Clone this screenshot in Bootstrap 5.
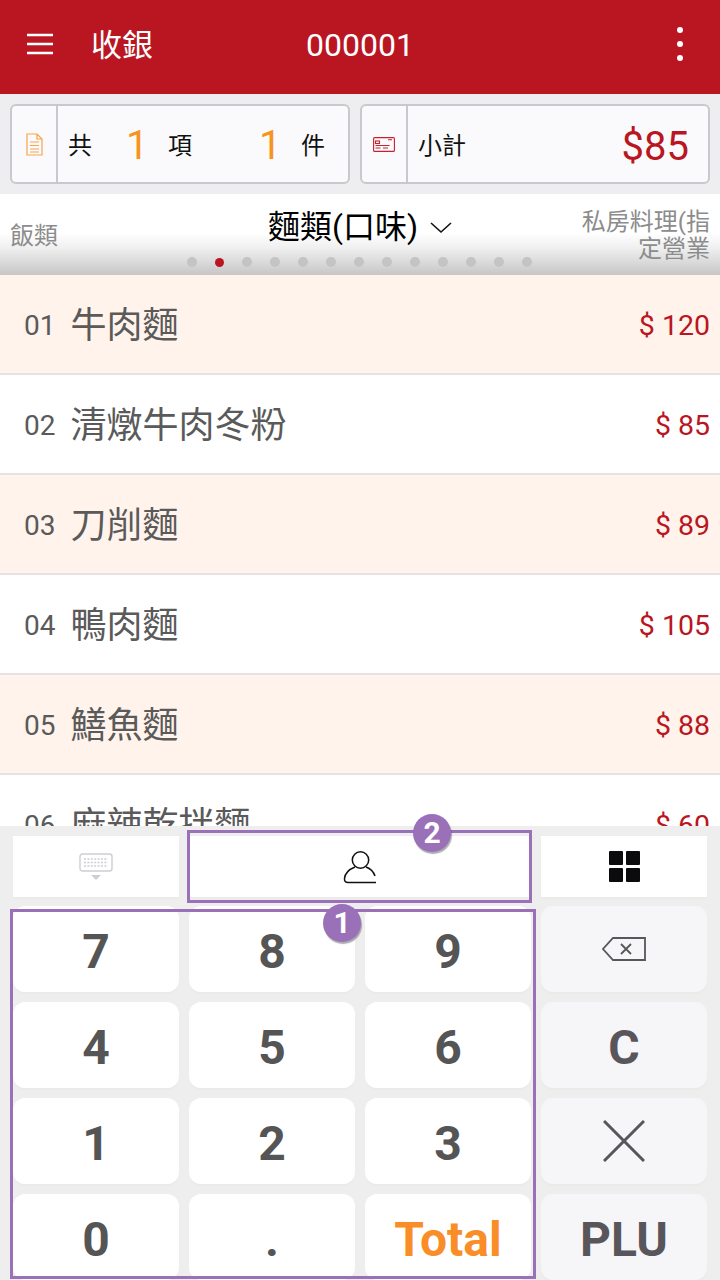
<!DOCTYPE html>
<html lang="zh-Hant">
<head>
  <meta charset="UTF-8" />
  <meta name="viewport" content="width=device-width, initial-scale=1.0"/>
  <title>收銀</title>
  <link href="https://cdn.jsdelivr.net/npm/bootstrap@5.3.2/dist/css/bootstrap.min.css" rel="stylesheet" />
  <style>
    html, body { margin: 0; background: #fff; }
    body { font-family: Roboto, "Noto Sans CJK TC", sans-serif; }
    .pos-page { width: 720px; height: 1280px; overflow: hidden; position: relative; }

    .pos-head { height: 94px; flex: none; background: #b91622; color: #fff; padding-left: 27px; padding-right: 37px; padding-bottom: 6px; }
    .pos-head-title { font-size: 31px; margin-left: 38px; margin-top: 2px; width: 215px; line-height: 1; }
    .pos-head-code { font-size: 32px; margin-top: 2px; line-height: 1; width: 106px; white-space: nowrap; }

    .sum-bar { height: 100px; flex: none; background: #eeeef0; padding: 10px; gap: 10px; }
    .sum-box { height: 80px; flex: none; background: #fafafc; border: 2px solid #c9c9cd; border-radius: 6px; }
    .sum-box-count { width: 340px; }
    .sum-box-price { width: 350px; }
    .sum-icon { width: 46px; flex: none; border-right: 2px solid #c9c9cd; }
    .sum-row { padding-top: 3px; }
    .sum-text { font-size: 24px; color: #111; line-height: 1; }
    .sum-num { font-size: 40px; color: #f7931e; line-height: 1; }
    .sum-price { font-size: 40px; color: #b91622; line-height: 1; margin-top: 2px; }

    .tab-bar { height: 81px; flex: none; background: linear-gradient(to bottom, #fff 0, #fff 48%, #eeeeee 68%, #c6c6c6 100%); position: relative; }
    .tab-side { font-size: 24px; line-height: 27px; color: #8c8c8c; position: absolute; }
    .tab-main { font-size: 32px; line-height: 1; color: #000; position: absolute; left: 268px; top: 17px; white-space: nowrap; }
    .tab-dots { position: absolute; left: 187px; top: 63px; gap: 18px; }
    .tab-dot { width: 10px; height: 10px; border-radius: 50%; background: #c4c4c4; }
    .tab-dot-on { background: #b91622; width: 9px; height: 9px; margin-top: 1px; }

    .dish-list { flex: 1 1 0; overflow: hidden; }
    .dish-row { height: 100px; padding: 3px 10px 0 24px; border-bottom: 2px solid #e4e4e8; background: #fff; }
    .dish-row-alt { background: #fff3ec; }
    .dish-no { font-size: 28px; color: #5a5a5a; width: 46.5px; line-height: 1; }
    .dish-name { font-size: 36px; color: #5a5a5a; line-height: 1; }
    .dish-price { font-size: 28.5px; color: #b91622; line-height: 1; margin-top: 2px; }

    .key-pad { height: 454px; flex: none; background: #eeeeef; padding: 10px 13px 0; gap: 9px; }
    .key-top { height: 61px; flex: none; gap: 10px; }
    .key-cell { background: #fff; box-shadow: 0 2px 2px rgba(0,0,0,.02); }
    .key-side { width: 166px; flex: none; }
    .key-wide { flex: 1 1 0; }
    .key-grid { display: grid; grid-template-columns: repeat(4, 166px); grid-auto-rows: 86px; gap: 10px; }
    .key-btn { background: #fff; border-radius: 12px; font-size: 48px; font-weight: 700; color: #555; line-height: 1; padding-top: 5px; box-shadow: 0 2px 2px rgba(0,0,0,.02); }
    .key-fn { background: #f6f5f8; color: #58565a; }
    .key-icon { padding-top: 0; }
    .key-total { color: #f98d27; }

    .mark-box { position: absolute; border: 3px solid #9a70b8; pointer-events: none; }
    .mark-num { position: absolute; width: 38px; height: 38px; border-radius: 50%; background: #9a70b8; color: #fff; font-size: 30px; font-weight: 700; line-height: 1; box-shadow: 1px 2px 1px rgba(90,90,100,.5); }
  </style>
</head>
<body>
<div class="pos-page d-flex flex-column">

  <!-- header -->
  <div class="pos-head d-flex align-items-center">
    <svg width="26" height="22" viewBox="0 0 26 22"><path d="M0 2h26M0 11h26M0 20h26" stroke="#fff" stroke-width="2.6"/></svg>
    <div class="pos-head-title">收銀</div>
    <div class="pos-head-code">000001</div>
    <div class="ms-auto d-flex flex-column" style="gap:8px">
      <span class="d-block bg-white rounded-1" style="width:6px;height:6px"></span>
      <span class="d-block bg-white rounded-1" style="width:6px;height:6px"></span>
      <span class="d-block bg-white rounded-1" style="width:6px;height:6px"></span>
    </div>
  </div>

  <!-- totals -->
  <div class="sum-bar d-flex">
    <div class="sum-box sum-box-count d-flex">
      <div class="sum-icon d-flex align-items-center justify-content-center">
        <svg width="17" height="23" viewBox="0 0 17 23" fill="none" stroke="#f5a54a" stroke-width="1.2"><path d="M1 1h10l5 5v16H1zM11 1v5h5M4 9h9M4 12.500h9M4 16h9M4 19h9"/></svg>
      </div>
      <div class="sum-row flex-grow-1 d-flex align-items-center sum-text" style="padding-left:10px">
        <span style="width:58px">共</span>
        <span class="sum-num" style="width:42px">1</span>
        <span style="width:91px">項</span>
        <span class="sum-num" style="width:42px">1</span>
        <span>件</span>
      </div>
    </div>
    <div class="sum-box sum-box-price d-flex">
      <div class="sum-icon d-flex align-items-center justify-content-center">
        <svg width="22" height="15" viewBox="0 0 22 15" fill="none" stroke="#c8202e" stroke-width="1.1"><rect x=".6" y=".6" width="20.800" height="13.800" rx="1"/><rect x="2.500" y="4" width="4" height="2.500"/><path d="M15 2.800h4M2.500 8.500h14M2.500 11h5M10 11h5"/></svg>
      </div>
      <div class="sum-row flex-grow-1 d-flex align-items-center justify-content-between sum-text" style="padding-left:10px;padding-right:19px">
        <span>小計</span>
        <span class="sum-price">$85</span>
      </div>
    </div>
  </div>

  <!-- category tabs -->
  <div class="tab-bar">
    <div class="tab-side" style="left:10px;top:29px">飯類</div>
    <div class="tab-main">麵類(口味)
      <svg class="ms-1" style="vertical-align:4px" width="22" height="12" viewBox="0 0 22 12" fill="none" stroke="#111" stroke-width="1.6"><path d="M1 1l10 9 10-9"/></svg>
    </div>
    <div class="tab-side text-end" style="right:10px;top:15px;width:140px">私房料理(指定營業</div>
    <div class="tab-dots d-flex">
      <span class="tab-dot"></span><span class="tab-dot tab-dot-on"></span>
      <span class="tab-dot"></span><span class="tab-dot"></span><span class="tab-dot"></span>
      <span class="tab-dot"></span><span class="tab-dot"></span><span class="tab-dot"></span>
      <span class="tab-dot"></span><span class="tab-dot"></span><span class="tab-dot"></span>
      <span class="tab-dot"></span><span class="tab-dot"></span>
    </div>
  </div>

  <!-- dishes -->
  <div class="dish-list">
    <div class="dish-row dish-row-alt d-flex align-items-center"><span class="dish-no">01</span><span class="dish-name">牛肉麵</span><span class="dish-price ms-auto">$ 120</span></div>
    <div class="dish-row d-flex align-items-center"><span class="dish-no">02</span><span class="dish-name">清燉牛肉冬粉</span><span class="dish-price ms-auto">$ 85</span></div>
    <div class="dish-row dish-row-alt d-flex align-items-center"><span class="dish-no">03</span><span class="dish-name">刀削麵</span><span class="dish-price ms-auto">$ 89</span></div>
    <div class="dish-row d-flex align-items-center"><span class="dish-no">04</span><span class="dish-name">鴨肉麵</span><span class="dish-price ms-auto">$ 105</span></div>
    <div class="dish-row dish-row-alt d-flex align-items-center"><span class="dish-no">05</span><span class="dish-name">鱔魚麵</span><span class="dish-price ms-auto">$ 88</span></div>
    <div class="dish-row d-flex align-items-center"><span class="dish-no">06</span><span class="dish-name">麻辣乾拌麵</span><span class="dish-price ms-auto">$ 60</span></div>
  </div>

  <!-- keypad -->
  <div class="key-pad d-flex flex-column">
    <div class="key-top d-flex">
      <div class="key-cell key-side d-flex align-items-center justify-content-center">
        <svg width="34" height="28" viewBox="0 0 34 28" fill="none"><rect x="1" y="1" width="32" height="17" rx="2.500" stroke="#cfcdd2" stroke-width="1.4"/><path d="M5 6h24M5 9.500h24M5 13h24" stroke="#cfcdd2" stroke-width="1.600" stroke-dasharray="2 1.400"/><path d="M12 22h10l-5 5z" fill="#cfcdd2"/></svg>
      </div>
      <div class="key-cell key-wide d-flex align-items-center justify-content-center">
        <svg width="34" height="34" viewBox="0 0 34 34" fill="none" stroke="#111" stroke-width="1.5"><circle cx="17.500" cy="10" r="8.200"/><path d="M12 17c-5 2-10 6-10.500 11.500C1.300 31 2.500 32.500 5 32.500h28"/><path d="M23 17c4 1.500 7.500 4.500 9 9"/></svg>
      </div>
      <div class="key-cell key-side d-flex align-items-center justify-content-center">
        <svg width="31" height="31" viewBox="0 0 31 31" fill="#0b0b0d"><rect width="14" height="14" rx="1"/><rect x="17" width="14" height="14" rx="1"/><rect y="17" width="14" height="14" rx="1"/><rect x="17" y="17" width="14" height="14" rx="1"/></svg>
      </div>
    </div>
    <div class="key-grid">
      <div class="key-btn d-flex align-items-center justify-content-center">7</div>
      <div class="key-btn d-flex align-items-center justify-content-center">8</div>
      <div class="key-btn d-flex align-items-center justify-content-center">9</div>
      <div class="key-btn key-fn key-icon d-flex align-items-center justify-content-center">
        <svg width="44" height="24" viewBox="0 0 44 24" fill="none" stroke="#58565a" stroke-width="1.800"><path d="M43 1H11L1 12l10 11h32z"/><path d="M19 7l10 10M29 7L19 17"/></svg>
      </div>
      <div class="key-btn d-flex align-items-center justify-content-center">4</div>
      <div class="key-btn d-flex align-items-center justify-content-center">5</div>
      <div class="key-btn d-flex align-items-center justify-content-center">6</div>
      <div class="key-btn key-fn d-flex align-items-center justify-content-center">C</div>
      <div class="key-btn d-flex align-items-center justify-content-center">1</div>
      <div class="key-btn d-flex align-items-center justify-content-center">2</div>
      <div class="key-btn d-flex align-items-center justify-content-center">3</div>
      <div class="key-btn key-fn key-icon d-flex align-items-center justify-content-center">
        <svg width="42" height="42" viewBox="0 0 42 42" stroke="#58565a" stroke-width="3"><path d="M1 1l40 40M41 1L1 41"/></svg>
      </div>
      <div class="key-btn d-flex align-items-center justify-content-center">0</div>
      <div class="key-btn d-flex align-items-center justify-content-center">.</div>
      <div class="key-btn key-total d-flex align-items-center justify-content-center">Total</div>
      <div class="key-btn key-fn d-flex align-items-center justify-content-center">PLU</div>
    </div>
  </div>

  <!-- purple annotation marks -->
  <div class="mark-box" style="left:10px;top:909px;width:526px;height:370px"></div>
  <div class="mark-box" style="left:187px;top:830px;width:345px;height:73px"></div>
  <div class="mark-num d-flex align-items-center justify-content-center" style="left:323px;top:904px">1</div>
  <div class="mark-num d-flex align-items-center justify-content-center" style="left:413px;top:814px">2</div>
</div>
<script src="https://cdn.jsdelivr.net/npm/bootstrap@5.3.2/dist/js/bootstrap.bundle.min.js"></script>
</body>
</html>
